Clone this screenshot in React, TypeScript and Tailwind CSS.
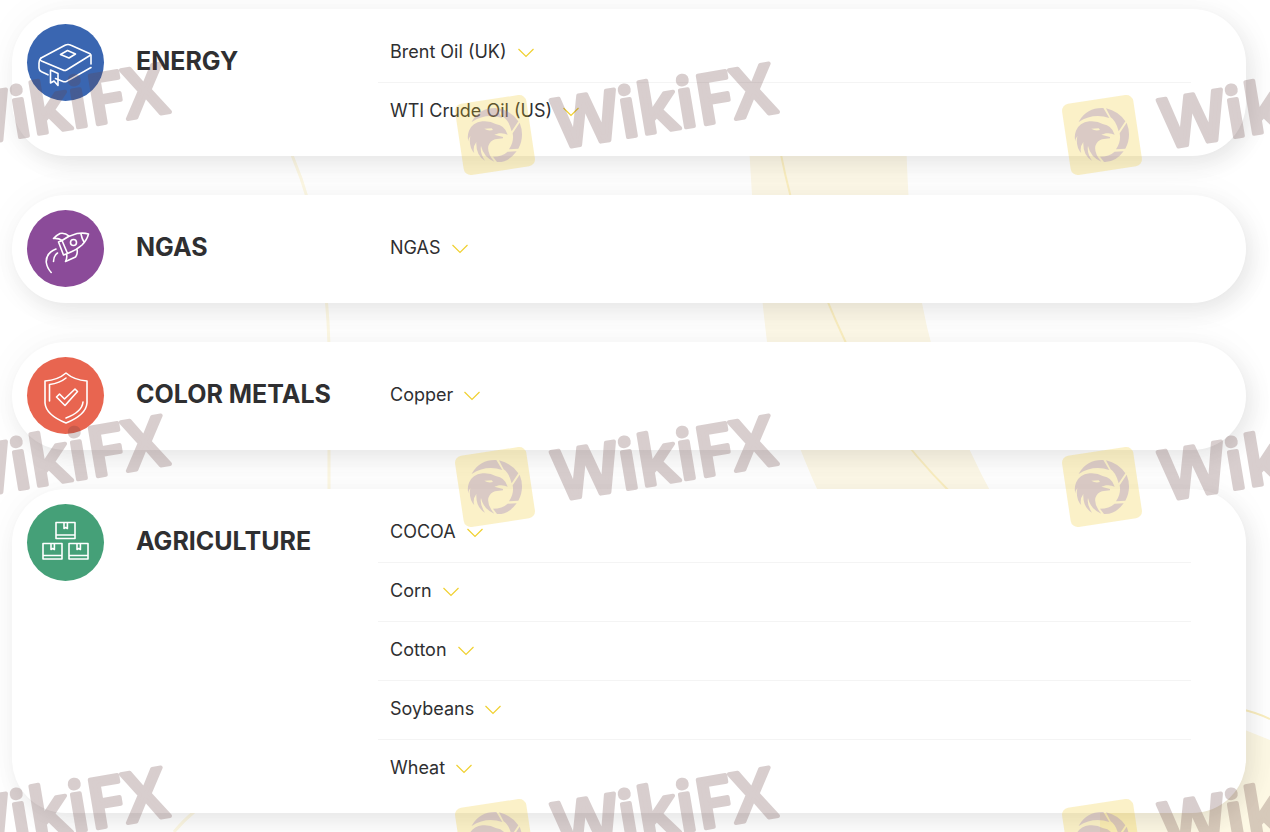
import React from 'react';

interface Instrument {
  name: string;
}

interface Group {
  title: string;
  color: string;
  icon: React.FC;
  items: Instrument[];
}

const BookIcon: React.FC = () => (
  <svg viewBox="0 0 77 77" className="size-full" fill="none" stroke="#fff" strokeWidth="1.6" strokeLinecap="round" strokeLinejoin="round" aria-hidden="true">
    <path d="M14 34 38 21.300q3-1.500 6 0L62.500 29.500q2 1 0 2.300L39.500 46q-1.800 1-3.600 0L14.500 37q-2.300-1.300-.5-3" />
    <path d="M14 34q-2 2-2 5v5q0 2.500 2.500 3.800l6.500 3M64 31v9M28.500 54.500l7.500 3q2 .8 4-.4L64 43.500" />
    <path d="M33.500 30.500l7-4 8 3.500-6.500 4z" />
    <path d="M23.500 46v13l3.500-2 4 4.500V49.500z" />
  </svg>
);

const RocketIcon: React.FC = () => (
  <svg viewBox="0 0 77 77" className="size-full" fill="none" stroke="#fff" strokeWidth="1.6" strokeLinecap="round" strokeLinejoin="round" aria-hidden="true">
    <path d="M35 30.500q7-5 15-7 7-1 11.500.5-1.500 6-6.500 11-6 5.500-14.500 8.500zM31.500 32l5 13 4-1.500-5.500-13z" />
    <path d="M54 24q1 5 3 8M42 26q-4-3.500-9-2.500-4 2-6.500 5 5-.5 8.500 2M50 39.500q1 4-1.500 7.500l-10 4.500q2-4 1-7" />
    <circle cx="46.500" cy="32.500" r="3" />
    <path d="M29 39q-10 4-9.800 13 .8 6 5 10.500M30.500 43q-4 3-4 8.500" />
  </svg>
);

const ShieldIcon: React.FC = () => (
  <svg viewBox="0 0 77 77" className="size-full" fill="none" stroke="#fff" strokeWidth="1.6" strokeLinejoin="round" strokeLinecap="round" aria-hidden="true">
    <path d="M39 16q8 7 21 8v22q-1 12-21 20Q19 58 18 46V24q13-1 21-8z" />
    <path d="M39 21q-6 5-16.500 6.500V44M56 45q-1 10-17 16" />
    <path d="m29.500 40 3-3 5 5 10.500-10 2.500 2.500L38 48.500z" />
  </svg>
);

const BoxesIcon: React.FC = () => (
  <svg viewBox="0 0 77 77" className="size-full" fill="none" stroke="#fff" strokeWidth="1.6" strokeLinejoin="round" aria-hidden="true">
    <path d="M29 18.500h19V34.500H29zM29 31h19M37 18.500v6l1.700-1 1.700 1v-6" />
    <path d="M16 39.500h19v15.500H16zM16 51.500h19M24 39.500v6l1.700-1 1.700 1v-6" />
    <path d="M42 39.500h19v15.500H42zM42 51.500h19M50 39.500v6l1.700-1 1.700 1v-6" />
  </svg>
);

const Chevron: React.FC = () => (
  <svg viewBox="0 0 16 10" className="mt-1 h-[10px] w-4" fill="none" stroke="#f0d030" strokeWidth="1.2" aria-hidden="true">
    <path d="m.5 1 7.500 7.500L15.500 1" />
  </svg>
);

const groups: Group[] = [
  {
    title: 'ENERGY',
    color: 'bg-[#3a66b1]',
    icon: BookIcon,
    items: [{ name: 'Brent Oil (UK)' }, { name: 'WTI Crude Oil (US)' }],
  },
  { title: 'NGAS', color: 'bg-[#8b4b99]', icon: RocketIcon, items: [{ name: 'NGAS' }] },
  { title: 'COLOR METALS', color: 'bg-[#e86550]', icon: ShieldIcon, items: [{ name: 'Copper' }] },
  {
    title: 'AGRICULTURE',
    color: 'bg-[#45a078]',
    icon: BoxesIcon,
    items: [{ name: 'COCOA' }, { name: 'Corn' }, { name: 'Cotton' }, { name: 'Soybeans' }, { name: 'Wheat' }],
  },
];

// Yellow ribbons that run behind the cards
const Ribbons: React.FC = () => (
  <svg className="absolute left-0 top-0 h-[832px] w-[1270px]" viewBox="0 0 1270 832" fill="none" aria-hidden="true">
    <path d="M748 130 752 195Q758 265 767 342 785 420 822 500L995 500Q940 400 922 303 908 240 906 130z" fill="#fdf8e7" />
    <path d="M780 150q5 25 11 48 20 70 55 145 30 75 105 150" stroke="#faeec0" strokeWidth="2" />
    <path d="M292 155q34 80 37 190v150M194 812q-10 8-20 20" stroke="#fdf8e4" strokeWidth="3" />
    <path d="M1240 728l30 12v92H1100v-40z" fill="#fdf8e4" />
    <path d="M1240 709q15 3 30 10" stroke="#faeec0" strokeWidth="2" />
  </svg>
);

const Mark: React.FC<{ x: number; y: number }> = ({ x, y }) => (
  <g transform={`translate(${x} ${y})`}>
    <rect x="-36" y="-36" width="72" height="72" rx="7" fill="#f0c623" opacity="0.25" transform="rotate(-8.500)" />
    {/* Eagle head inside a camera shutter ring */}
    <g opacity="0.32" fill="#977bc0" transform="translate(-46 -45) scale(.3333)">
      <path d="M70 92Q94 52 142 54L160 84Q112 68 68 96z" />
      <path d="M150 55Q188 64 208 94L188 124Q180 92 164 82z" />
      <path d="M212 98Q228 138 208 176L180 178Q196 154 191 130z" />
      <path d="M203 184Q178 218 144 216L132 200Q160 200 176 185z" />
      <path d="M60 122Q70 98 100 94 124 92 140 102 168 106 176 134 164 128 150 130L136 134 162 141 162 145 138 148Q124 152 118 168 114 190 136 215 104 202 96 168 92 188 108 212 80 196 82 156 70 172 76 190 58 170 64 138 58 146 58 154 54 138 60 122zM106 116Q118 124 132 120L128 115z" fillRule="evenodd" />
    </g>
    <text
      x="60"
      y="24"
      transform="rotate(-9.500)"
      opacity="0.25"
      className="font-['Open_Sans',sans-serif] text-[69px] font-semibold"
      fill="#673f3f"
      stroke="#673f3f"
      strokeWidth="4"
      strokeLinejoin="round"
    >
      WikiFX
    </text>
  </g>
);

const Watermark: React.FC = () => (
  <svg className="pointer-events-none absolute left-0 top-0 h-[832px] w-[1270px]" viewBox="0 0 1270 832">
    {[135, 487, 839].map((y) =>
      [-113, 495, 1102].map((x) => <Mark key={`${x}-${y}`} x={x} y={y} />)
    )}
  </svg>
);

const GroupCard: React.FC<{ group: Group }> = ({ group }) => (
  <section className="flex items-start rounded-[54px] bg-white py-[15px] pl-[15px] pr-[55px] shadow-[6px_9px_22px_rgba(0,0,0,0.08),0_0_40px_rgba(0,0,0,0.04)]">
    <div className={`size-[77px] shrink-0 rounded-full ${group.color}`}>
      <group.icon />
    </div>
    <h2 className="ml-8 flex h-[76px] w-[242px] shrink-0 items-center whitespace-nowrap text-[25px] font-bold">
      {group.title}
    </h2>
    <ul className="flex min-h-[78px] flex-1 flex-col justify-center divide-y divide-[#f4f4f4]">
      {group.items.map((item) => (
        <li key={item.name}>
          <button className="flex h-[58px] w-full items-center gap-[11px] pb-1 pl-3 text-left text-[18px]">
            {item.name}
            <Chevron />
          </button>
        </li>
      ))}
    </ul>
  </section>
);

export default function App() {
  return (
    <div className="relative min-h-screen overflow-hidden bg-white font-['Inter',sans-serif] text-[#2f2f31]">
      <Ribbons />
      <main className="relative flex flex-col gap-[39px] pb-[19px] pl-3 pr-6 pt-[9px]">
        {groups.map((group) => (
          <GroupCard key={group.title} group={group} />
        ))}
      </main>
      <Watermark />
    </div>
  );
}
